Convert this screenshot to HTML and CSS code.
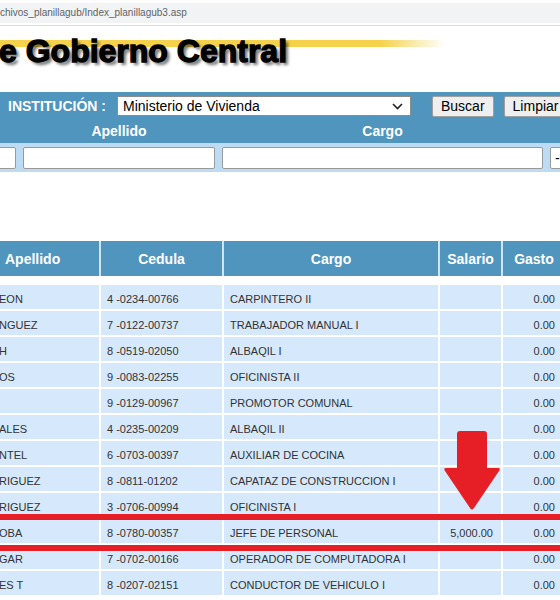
FILE: index.html
```html
<!DOCTYPE html>
<html lang="es">
<head>
<meta charset="utf-8">
<title>Planilla</title>
<link rel="stylesheet" href="styles.css">
</head>
<body>
<div class="page">
  <div class="browser"><div class="urlbar">chivos_planillagub/Index_planillagub3.asp</div></div>
  <div class="banner"><h1 class="title">e Gobierno Central</h1></div>

  <form class="panel">
    <div class="inst-row">
      <span class="inst-label">INSTITUCIÓN :</span>
      <div class="select"><span>Ministerio de Vivienda</span>
        <svg class="chev" width="11" height="7" viewBox="0 0 11 7"><path d="M1 1 L5.5 5.5 L10 1" fill="none" stroke="#222" stroke-width="1.6"/></svg>
      </div>
      <button type="button" class="btn btn-first">Buscar</button>
      <button type="button" class="btn">Limpiar</button>
    </div>
    <div class="label-row"><span></span><span>Apellido</span><span>Cargo</span><span></span></div>
    <div class="input-row">
      <div class="field f1"></div>
      <div class="field"></div>
      <div class="field"></div>
      <div class="field f4">--</div>
    </div>
  </form>

  <div class="table">
    <div class="thead">
      <div class="th left">Apellido</div>
      <div class="th">Cedula</div>
      <div class="th">Cargo</div>
      <div class="th">Salario</div>
      <div class="th">Gasto</div>
    </div>
    <div class="tbody">
      <div class="td name">EON</div><div class="td">4 -0234-00766</div><div class="td">CARPINTERO II</div><div class="td num"></div><div class="td num gasto">0.00</div>
      <div class="td name">NGUEZ</div><div class="td">7 -0122-00737</div><div class="td">TRABAJADOR MANUAL I</div><div class="td num"></div><div class="td num gasto">0.00</div>
      <div class="td name">H</div><div class="td">8 -0519-02050</div><div class="td">ALBAQIL I</div><div class="td num"></div><div class="td num gasto">0.00</div>
      <div class="td name">OS</div><div class="td">9 -0083-02255</div><div class="td">OFICINISTA II</div><div class="td num"></div><div class="td num gasto">0.00</div>
      <div class="td name"></div><div class="td">9 -0129-00967</div><div class="td">PROMOTOR COMUNAL</div><div class="td num"></div><div class="td num gasto">0.00</div>
      <div class="td name">ALES</div><div class="td">4 -0235-00209</div><div class="td">ALBAQIL II</div><div class="td num"></div><div class="td num gasto">0.00</div>
      <div class="td name">NTEL</div><div class="td">6 -0703-00397</div><div class="td">AUXILIAR DE COCINA</div><div class="td num"></div><div class="td num gasto">0.00</div>
      <div class="td name">RIGUEZ</div><div class="td">8 -0811-01202</div><div class="td">CAPATAZ DE CONSTRUCCION I</div><div class="td num"></div><div class="td num gasto">0.00</div>
      <div class="td name">RIGUEZ</div><div class="td">3 -0706-00994</div><div class="td">OFICINISTA I</div><div class="td num"></div><div class="td num gasto">0.00</div>
      <div class="td name">OBA</div><div class="td">8 -0780-00357</div><div class="td">JEFE DE PERSONAL</div><div class="td num">5,000.00</div><div class="td num gasto">0.00</div>
      <div class="td name">GAR</div><div class="td">7 -0702-00166</div><div class="td">OPERADOR DE COMPUTADORA I</div><div class="td num"></div><div class="td num gasto">0.00</div>
      <div class="td name">ES T</div><div class="td">8 -0207-02151</div><div class="td">CONDUCTOR DE VEHICULO I</div><div class="td num"></div><div class="td num gasto">0.00</div>
    </div>
  </div>

  <svg class="marks" width="560" height="600" viewBox="0 0 560 600">
    <rect x="0" y="514" width="560" height="6" fill="#e61e25"/>
    <rect x="0" y="545" width="560" height="6" fill="#e61e25"/>
    <path d="M457 434 Q457 431 460 431 L484 431 Q487 431 487 434 L487 468 L498 468 Q501 468 499 471 L474 508 Q472 511 470 508 L445 471 Q443 468 446 468 L457 468 Z" fill="#e61e25"/>
  </svg>
</div>
</body>
</html>
```

FILE: styles.css
```css
* { box-sizing: border-box; }
html, body { margin: 0; padding: 0; overflow: hidden; background: #fff; }

.page {
  position: relative;
  width: 560px;
  height: 600px;
  overflow: hidden;
  font-family: "Liberation Sans", Arial, sans-serif;
}

.browser {
  padding: 3px 0 2px;
  border-bottom: 1px solid #dadce0;
}
.urlbar {
  height: 20px;
  line-height: 20px;
  background: #f1f3f4;
  color: #5f6368;
  font-size: 10px;
  white-space: nowrap;
}

.banner {
  height: 66px;
  background: linear-gradient(to right, #f5d24a 0, #f5d24a 380px, rgba(245, 210, 74, 0) 445px) no-repeat 0 14px / 100% 7px;
}
.title {
  margin: 0 0 0 -1px;
  padding-top: 9px;
  font-size: 32px;
  line-height: 32px;
  font-weight: bold;
  color: #000;
  -webkit-text-stroke: 1.3px #000;
  text-shadow: 3px 3px 3px rgba(0, 0, 0, 0.55);
  white-space: nowrap;
}

.panel {
  margin: 0;
  background: #5095be;
}
.inst-row {
  height: 28px;
  display: flex;
  align-items: center;
  padding-left: 8px;
  white-space: nowrap;
}
.inst-row > * { flex-shrink: 0; }
.inst-label {
  width: 109px;
  color: #fff;
  font-weight: bold;
  font-size: 14px;
}
.select {
  width: 294px;
  height: 20px;
  background: #fff;
  border: 1px solid #8c8c8c;
  display: flex;
  align-items: center;
  justify-content: space-between;
  padding: 0 7px 0 5px;
  font-size: 14px;
  color: #000;
}
.chev { display: block; }
.btn {
  height: 21px;
  margin-left: 10px;
  padding: 0 8px;
  font-family: "Liberation Sans", Arial, sans-serif;
  font-size: 14px;
  color: #000;
  background: #efefef;
  border: 1px solid #a0a0a0;
  border-radius: 2px;
}
.btn-first { margin-left: 21px; }

.label-row,
.input-row {
  display: grid;
  grid-template-columns: 16px 192px 321px 1fr;
  column-gap: 7px;
}
.label-row {
  height: 23px;
  line-height: 23px;
  color: #fff;
  font-weight: bold;
  font-size: 14px;
  text-align: center;
}
.input-row {
  height: 29px;
  padding-top: 4px;
  background: #bddcf4;
}
.field {
  height: 22px;
  background: #fff;
  border: 1px solid #9a9a9a;
  border-radius: 2px;
}
.f1 { margin-left: -20px; }
.f4 {
  font-size: 14px;
  line-height: 20px;
  padding-left: 4px;
  color: #000;
  white-space: nowrap;
  overflow: hidden;
  min-width: 30px;
}

.table { margin-top: 69px; }
.thead,
.tbody {
  display: grid;
  grid-template-columns: 99px 121px 214px 61px 62px;
  column-gap: 2px;
}
.thead { background: #d2e4f0; }
.th {
  height: 35px;
  background: #5095be;
  color: #fff;
  font-weight: bold;
  font-size: 14px;
  display: flex;
  align-items: center;
  justify-content: center;
}
.th.left {
  justify-content: flex-start;
  padding-left: 5px;
}
.tbody {
  margin-top: 9px;
  row-gap: 2px;
}
.td {
  height: 24px;
  line-height: 28px;
  background: #d6e8fb;
  color: #333;
  font-size: 11px;
  padding-left: 6px;
  white-space: nowrap;
  overflow: hidden;
}
.td.name {
  padding-left: 0;
  text-indent: -1px;
}
.td.num {
  text-align: right;
  padding-left: 0;
  padding-right: 8px;
}
.td.gasto { padding-right: 10px; }

.marks {
  position: absolute;
  left: 0;
  top: 0;
  pointer-events: none;
}
```
